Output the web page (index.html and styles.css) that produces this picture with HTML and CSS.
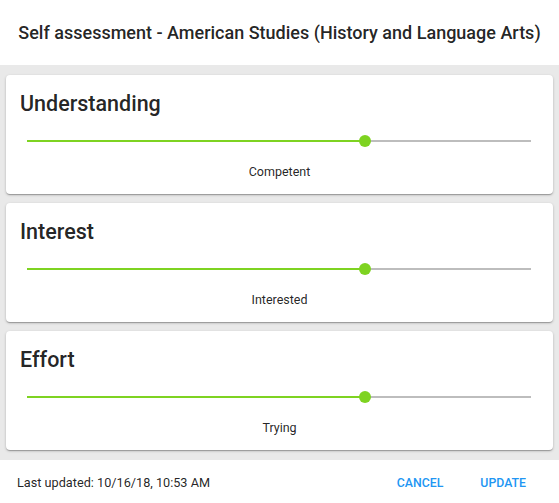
FILE: index.html
```html
<!DOCTYPE html>
<html lang="en">
<head>
<meta charset="utf-8">
<title>Self assessment</title>
<link rel="stylesheet" href="styles.css">
</head>
<body>
<div class="dialog">
  <header class="dialog-header">
    <h1 class="dialog-title">Self assessment - American Studies (History and Language Arts)</h1>
  </header>
  <main class="dialog-body">
    <section class="card">
      <h2 class="card-title">Understanding</h2>
      <div class="slider">
        <div class="track">
          <div class="fill" style="width: 67%"></div>
          <div class="thumb" style="left: 67%"></div>
        </div>
      </div>
      <div class="value">Competent</div>
    </section>
    <section class="card">
      <h2 class="card-title">Interest</h2>
      <div class="slider">
        <div class="track">
          <div class="fill" style="width: 67%"></div>
          <div class="thumb" style="left: 67%"></div>
        </div>
      </div>
      <div class="value">Interested</div>
    </section>
    <section class="card">
      <h2 class="card-title">Effort</h2>
      <div class="slider">
        <div class="track">
          <div class="fill" style="width: 67%"></div>
          <div class="thumb" style="left: 67%"></div>
        </div>
      </div>
      <div class="value">Trying</div>
    </section>
  </main>
  <footer class="dialog-footer">
    <span class="updated">Last updated: 10/16/18, 10:53 AM</span>
    <div class="actions">
      <button class="btn">Cancel</button>
      <button class="btn">Update</button>
    </div>
  </footer>
</div>
</body>
</html>
```

FILE: styles.css
```css
* { box-sizing: border-box; }

html, body {
  margin: 0;
  padding: 0;
  background: #ffffff;
}

body {
  font-family: Roboto, "Liberation Sans", Arial, sans-serif;
  color: rgba(0, 0, 0, 0.87);
  width: 559px;
  height: 503px;
  overflow: hidden;
}

.dialog {
  display: flex;
  flex-direction: column;
  height: 503px;
}

.dialog-header {
  height: 65px;
  display: flex;
  align-items: center;
  justify-content: center;
  background: #ffffff;
}

.dialog-title {
  margin: 0;
  font-size: 18px;
  font-weight: 500;
  line-height: 24px;
  padding-top: 1px;
  white-space: nowrap;
}

.dialog-body {
  background: #e9e9e9;
  padding: 10px 6px 10px 6px;
  display: flex;
  flex-direction: column;
  gap: 9px;
}

.card {
  background: #ffffff;
  border-radius: 4px;
  box-shadow: 0 1px 3px rgba(0, 0, 0, 0.2), 0 1px 1px rgba(0, 0, 0, 0.14), 0 2px 1px -1px rgba(0, 0, 0, 0.12);
  padding: 17px 14px 14px 14px;
  height: 119px;
  display: flex;
  flex-direction: column;
}

.card-title {
  margin: 0;
  font-size: 21.5px;
  font-weight: 500;
  line-height: 24px;
}

.slider {
  height: 24px;
  margin: 13px 8px 0 7px;
  display: flex;
  align-items: center;
}

.track {
  position: relative;
  width: 100%;
  height: 2px;
  background: #bdbdbd;
}

.fill {
  height: 2px;
  background: #7ed321;
}

.thumb {
  position: absolute;
  top: 50%;
  width: 12px;
  height: 12px;
  margin: -6px 0 0 -6px;
  border-radius: 50%;
  background: #7ed321;
}

.value {
  margin-top: 11px;
  font-size: 12.5px;
  line-height: 16px;
  text-align: center;
}

.dialog-footer {
  flex: 1;
  display: flex;
  align-items: center;
  justify-content: space-between;
  padding: 2px 17px 0 17px;
  background: #ffffff;
}

.updated {
  font-size: 12.7px;
  line-height: 16px;
}

.actions {
  display: flex;
  gap: 5px;
}

.btn {
  font-family: Roboto, "Liberation Sans", Arial, sans-serif;
  font-size: 12.3px;
  font-weight: 500;
  text-transform: uppercase;
  color: #2196f3;
  background: transparent;
  border: 0;
  padding: 8px 16px;
  line-height: 16px;
  cursor: pointer;
}
```
